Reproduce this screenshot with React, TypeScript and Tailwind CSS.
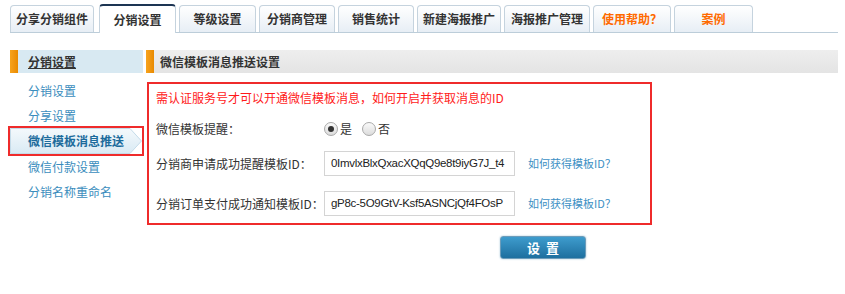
const tabs = [
  { label: '分享分销组件', w: 'w-[84px]' },
  { label: '分销设置', w: 'w-[77px]', active: true },
  { label: '等级设置', w: 'w-[77px]' },
  { label: '分销商管理', w: 'w-[76px]' },
  { label: '销售统计', w: 'w-[76px]' },
  { label: '新建海报推广', w: 'w-[84px]' },
  { label: '海报推广管理', w: 'w-[86px]' },
  { label: '使用帮助？', w: 'w-[78px]', orange: true },
  { label: '案例', w: 'w-[79px]', orange: true },
];

const sideItems = ['分销设置', '分享设置', '微信模板消息推送', '微信付款设置', '分销名称重命名'];

const font = { fontFamily: '"Noto Sans CJK SC", "Liberation Sans", sans-serif' };

function Radio({ checked, label }: { checked?: boolean; label: string }) {
  return (
    <label className="flex items-center gap-[2px] text-[12px] text-[#333]">
      <span className="w-[14px] h-[14px] rounded-full border border-[#a9a9a9] bg-gradient-to-b from-[#fafafa] to-[#dcdcdc] flex items-center justify-center">
        {checked && <span className="w-[6px] h-[6px] rounded-full bg-[#333]" />}
      </span>
      {label}
    </label>
  );
}

function IdRow({ label, value }: { label: string; value: string }) {
  return (
    <div className="flex items-center h-[25px]">
      <div className="w-[168px] text-[12px] text-[#333]">{label}</div>
      <div className="w-[191px] h-[25px] border border-[#d4d4d4] bg-white flex items-center px-[6px] text-[11.5px] tracking-[-0.3px] text-[#222] overflow-hidden whitespace-nowrap" style={{ fontFamily: '"Liberation Sans", Arial, sans-serif' }}>
        {value}
      </div>
      <a className="ml-[13px] text-[11px] text-[#3b8fc4]">如何获得模板ID？</a>
    </div>
  );
}

export default function App() {
  return (
    <div className="w-[845px] h-[294px] bg-white overflow-hidden" style={font}>
      {/* tabs */}
      <div className="pl-[10px] pr-[7px] pt-[5px]">
        <div className="flex items-end gap-[3px] h-[28px] border-b border-[#bccdd9]">
          {tabs.map((t) =>
            t.active ? (
              <div key={t.label} className={`${t.w} h-[29px] -mb-px rounded-t-[4px] border-t-2 border-x border-t-[#1d3553] border-x-[#c5d3de] bg-white flex items-center justify-center text-[12px] font-bold text-[#333] ml-[2px]`}>
                {t.label}
              </div>
            ) : (
              <div key={t.label} className={`${t.w} h-[27px] rounded-t-[4px] border border-b-0 border-[#c5d3de] bg-gradient-to-b from-[#ffffff] to-[#e7eef5] flex items-center justify-center text-[12px] font-bold ${t.orange ? 'text-[#ff6a00]' : 'text-[#333]'}`}>
                {t.label}
              </div>
            )
          )}
        </div>
      </div>

      <div className="flex pl-[10px] pt-[17px]">
        {/* sidebar */}
        <div className="w-[133px]">
          <div className="h-[23px] flex bg-[#d8e9f2]">
            <div className="w-[8px] bg-gradient-to-r from-[#f7a31c] to-[#e98a00]" />
            <span className="ml-[10px] leading-[23px] text-[12px] font-bold text-[#333] underline">分销设置</span>
          </div>
          <div className="pt-[5px]">
            {sideItems.map((s) =>
              s === '微信模板消息推送' ? (
                <div key={s} className="relative -ml-[2px] w-[136px] h-[30px] -my-[2px] border-2 border-[#ef2b2b]">
                  <svg className="absolute inset-0" width="132" height="26" viewBox="0 0 132 26">
                    <defs>
                      <linearGradient id="g" x1="0" y1="0" x2="0" y2="1">
                        <stop offset="0" stopColor="#f4f9fc" />
                        <stop offset="1" stopColor="#d9eaf4" />
                      </linearGradient>
                    </defs>
                    <polygon points="0.5,0.5 120,0.5 131.5,13 120,25.5 0.5,25.5" fill="url(#g)" stroke="#c4dbe9" />
                  </svg>
                  <span className="relative block pl-[18px] leading-[26px] text-[12px] font-bold text-[#1c6b9c]">{s}</span>
                </div>
              ) : (
                <div key={s} className="h-[25px] leading-[25px] pl-[18px] text-[12px] text-[#3a8dbd]">
                  {s}
                </div>
              )
            )}
          </div>
        </div>

        {/* content */}
        <div className="ml-[3px] w-[692px]">
          <div className="h-[23px] flex bg-gradient-to-b from-[#eeeeee] to-[#e4e4e4]">
            <div className="w-[8px] bg-gradient-to-r from-[#f7a31c] to-[#e98a00]" />
            <span className="ml-[6px] leading-[23px] text-[12px] font-bold text-[#333]">微信模板消息推送设置</span>
          </div>
          <div className="mt-[9px] ml-px w-[505px] h-[143px] border-2 border-[#ef2b2b] px-[7px] pt-[4px]">
            <div className="text-[12px] text-[#ff1a1a] leading-[20px]">需认证服务号才可以开通微信模板消息，如何开启并获取消息的ID</div>
            <div className="flex items-center h-[22px] mt-[10px]">
              <div className="w-[168px] text-[12px] text-[#333]">微信模板提醒：</div>
              <div className="flex gap-[10px]">
                <Radio checked label="是" />
                <Radio label="否" />
              </div>
            </div>
            <div className="mt-[11px]">
              <IdRow label="分销商申请成功提醒模板ID：" value="0ImvlxBlxQxacXQqQ9e8t9iyG7J_t4" />
            </div>
            <div className="mt-[15px]">
              <IdRow label="分销订单支付成功通知模板ID：" value="gP8c-5O9GtV-Ksf5ASNCjQf4FOsP" />
            </div>
          </div>
          <div className="mt-[11px] ml-[354px] w-[86px] h-[23px] rounded-[3px] border border-[#6c9cba] bg-gradient-to-b from-[#3e9ccd] to-[#1d6f9f] flex items-center justify-center text-white text-[13px] font-bold tracking-[6px] pl-[6px] shadow-[0_0_2px_#9cc0d6]">
            设置
          </div>
        </div>
      </div>
    </div>
  );
}
